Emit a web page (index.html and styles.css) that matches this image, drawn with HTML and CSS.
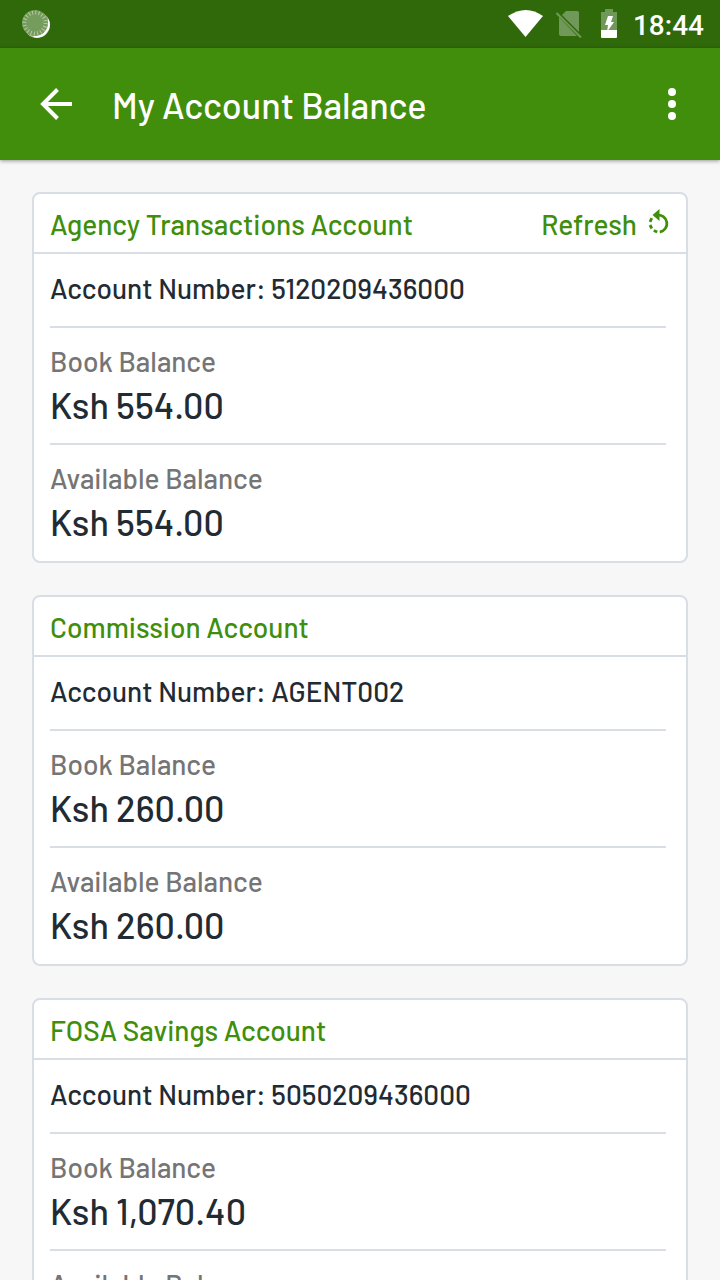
FILE: index.html
```
<!DOCTYPE html>
<html lang="en">
<head>
<meta charset="utf-8">
<meta name="viewport" content="width=device-width, initial-scale=1">
<title>My Account Balance</title>
<link rel="stylesheet" href="styles.css">
</head>
<body>
<div class="status-bar">
  <svg class="status-sync" width="30" height="30" viewBox="0 0 30 30" aria-hidden="true">
    <circle cx="16" cy="16" r="13" fill="#b5c8a8"/>
    <path d="M27.500 10A13 13 0 0 1 12 28Z" fill="#fff"/>
    <circle cx="14" cy="14" r="13" fill="#759c5c"/>
    <circle cx="14" cy="14" r="10.500" fill="none" stroke="#b4cba5" stroke-width="4" stroke-dasharray="1 2.299"/>
  </svg>
  <svg class="status-wifi" width="36" height="28" viewBox="0 0 36 28" aria-hidden="true">
    <path d="M0 6Q18-6 35 6L17.500 27Z" fill="#fff"/>
  </svg>
  <svg class="status-sim" width="27" height="28" viewBox="0 0 27 28" aria-hidden="true">
    <path d="M10 1H21Q23 1 23 3V22L7 6L6 5ZM3 7L21 26H5Q3 26 3 24Z" fill="#709859"/>
    <path d="M0.500 3L25 27.500" stroke="#709859" stroke-width="2"/>
  </svg>
  <svg class="status-battery" width="16" height="30" viewBox="0 0 16 30" aria-hidden="true">
    <path d="M4 0H12V3H16V22H0V3H4Z" fill="#709859"/>
    <path d="M0 21H16V28Q16 29 15 29H1Q0 29 0 28Z" fill="#fff"/>
    <path d="M7 7H12L10 13H13L6 23L7 16H4Z" fill="#fff"/>
  </svg>
  <span class="status-time">18:44</span>
</div>
<header class="app-bar">
  <button class="icon-button" type="button" aria-label="Back">
    <svg width="32" height="32" viewBox="0 0 32 32" aria-hidden="true"><path d="M17.500 1.500L3 16L17.500 30.500M3 16H32" fill="none" stroke="#fff" stroke-width="4"/></svg>
  </button>
  <h1 class="app-title">My Account Balance</h1>
  <button class="icon-button" type="button" aria-label="More options">
    <svg width="8" height="32" viewBox="0 0 8 32" fill="#fff" aria-hidden="true"><circle cx="4" cy="4" r="4"/><circle cx="4" cy="16" r="4"/><circle cx="4" cy="28" r="4"/></svg>
  </button>
</header>
<main class="accounts">
  <section class="card">
    <div class="card-header">
      <h2 class="card-title">Agency Transactions Account</h2>
      <button class="refresh" type="button">Refresh
        <svg width="22" height="26" viewBox="0 0 22 26" aria-hidden="true">
          <path d="M9 6.200A8.500 8.500 0 1 1 11.800 23" fill="none" stroke="#408e0c" stroke-width="2.800"/>
          <path d="M11.500 0V12L4.500 6Z" fill="#408e0c"/>
          <path d="M9.200 23L5.800 21.400M3.800 19.500L2 16M2 12.800L3.800 9.200" fill="none" stroke="#408e0c" stroke-width="2.800"/>
        </svg>
      </button>
    </div>
    <div class="card-body">
      <p class="row number">Account Number: 5120209436000</p>
      <div class="row balance"><p class="label">Book Balance</p><p class="amount">Ksh 554.00</p></div>
      <div class="row balance"><p class="label">Available Balance</p><p class="amount">Ksh 554.00</p></div>
    </div>
  </section>
  <section class="card">
    <div class="card-header"><h2 class="card-title">Commission Account</h2></div>
    <div class="card-body">
      <p class="row number">Account Number: AGENT002</p>
      <div class="row balance"><p class="label">Book Balance</p><p class="amount">Ksh 260.00</p></div>
      <div class="row balance"><p class="label">Available Balance</p><p class="amount">Ksh 260.00</p></div>
    </div>
  </section>
  <section class="card">
    <div class="card-header"><h2 class="card-title">FOSA Savings Account</h2></div>
    <div class="card-body">
      <p class="row number">Account Number: 5050209436000</p>
      <div class="row balance"><p class="label">Book Balance</p><p class="amount">Ksh 1,070.40</p></div>
      <div class="row balance"><p class="label">Available Balance</p><p class="amount">Ksh 1,070.40</p></div>
    </div>
  </section>
</main>
</body>
</html>
```
FILE: styles.css
```
* {
  box-sizing: border-box;
  margin: 0;
}

body {
  display: flex;
  flex-direction: column;
  height: 100vh;
  background: #f7f7f7;
  color: #222b33;
  font-family: Barlow, Roboto, sans-serif;
  font-size: 28px;
  font-weight: 500;
}

svg {
  display: block;
  flex: none;
}

.status-bar {
  display: flex;
  flex: none;
  align-items: center;
  height: 48px;
  padding: 0 16px 0 21px;
  background: #30690a;
  color: #fff;
}

.status-sync {
  margin-right: auto;
}

.status-sim {
  margin-left: 12px;
}

.status-battery {
  margin-left: 18px;
}

.status-time {
  margin-left: 16px;
  padding-top: 2px;
  font-family: Roboto, sans-serif;
}

.app-bar {
  display: flex;
  flex: none;
  align-items: center;
  height: 112px;
  padding: 0 44px 0 40px;
  background: #408e0c;
  color: #fff;
  box-shadow: 0 1px 4px rgba(0, 0, 0, 0.4);
  z-index: 1;
}

.app-title {
  flex: 1;
  margin-left: 40px;
  font-size: 36px;
  font-weight: 500;
}

.icon-button,
.refresh {
  padding: 0;
  border: 0;
  background: none;
  color: inherit;
  font: inherit;
}

.accounts {
  display: flex;
  flex: 1;
  flex-direction: column;
  gap: 32px;
  min-height: 0;
  padding: 32px;
  overflow-y: auto;
  scrollbar-width: none;
}

.card {
  flex: none;
  border: 2px solid #d8dde6;
  border-radius: 8px;
  background: #fff;
}

.card-header {
  display: flex;
  align-items: center;
  justify-content: space-between;
  padding: 10px 16px 8px;
  border-bottom: 2px solid #d8dde6;
  color: #408e0c;
  line-height: 40px;
}

.card-title {
  font-size: 28px;
  font-weight: 500;
}

.refresh {
  display: flex;
  align-items: center;
  gap: 11px;
}

.refresh svg {
  margin-bottom: 4px;
}

.card-body {
  padding: 0 20px 0 16px;
}

.row {
  border-bottom: 2px solid #d8dde6;
}

.row:last-child {
  border-bottom: 0;
}

.number {
  padding: 14px 0 18px;
  line-height: 40px;
}

.balance {
  padding: 13px 0 14px;
}

.balance:last-child {
  padding-bottom: 15px;
}

.label {
  color: #757575;
  line-height: 40px;
}

.amount {
  font-size: 36px;
  line-height: 48px;
}
```
